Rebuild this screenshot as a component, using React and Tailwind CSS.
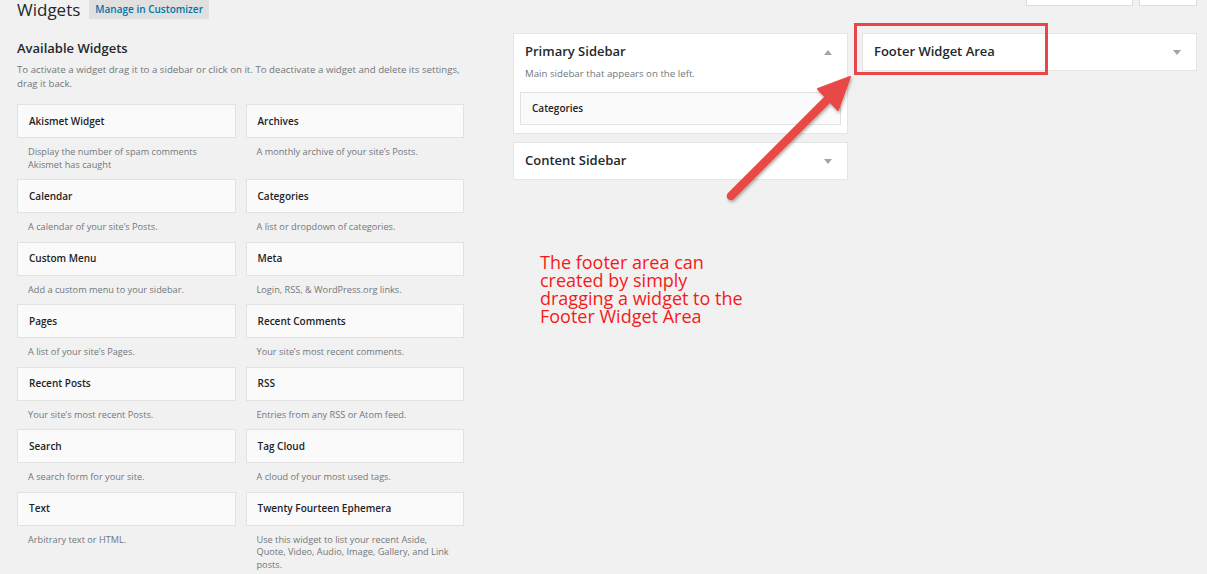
import React from "react";

const widgets = [
  ["Akismet Widget", "Display the number of spam comments Akismet has caught"],
  ["Archives", "A monthly archive of your site’s Posts."],
  ["Calendar", "A calendar of your site’s Posts."],
  ["Categories", "A list or dropdown of categories."],
  ["Custom Menu", "Add a custom menu to your sidebar."],
  ["Meta", "Login, RSS, & WordPress.org links."],
  ["Pages", "A list of your site’s Pages."],
  ["Recent Comments", "Your site’s most recent comments."],
  ["Recent Posts", "Your site’s most recent Posts."],
  ["RSS", "Entries from any RSS or Atom feed."],
  ["Search", "A search form for your site."],
  ["Tag Cloud", "A cloud of your most used tags."],
  ["Text", "Arbitrary text or HTML."],
  [
    "Twenty Fourteen Ephemera",
    "Use this widget to list your recent Aside, Quote, Video, Audio, Image, Gallery, and Link posts.",
  ],
];

function Caret({ up }) {
  return (
    <svg width="8" height="5" viewBox="0 0 8 5" className="mr-[4px]">
      {up ? <path d="M4 0L8 5H0z" fill="#a0a5aa" /> : <path d="M0 0h8L4 5z" fill="#a0a5aa" />}
    </svg>
  );
}

function Widget({ title, desc }) {
  return (
    <div>
      <div className="h-[34px] border border-[#e2e2e2] bg-[#fafafa] px-[11px] flex items-center text-[10px] font-semibold text-[#1d2327]">
        {title}
      </div>
      <p className="mt-[8px] mb-[8px] px-[11px] text-[9.2px] leading-[12.5px] text-[#72777c]">{desc}</p>
    </div>
  );
}

function SidebarHead({ title, up }) {
  return (
    <div className="h-[36px] px-[11px] flex items-center justify-between">
      <span className="text-[13px] font-semibold text-[#23282d]">{title}</span>
      <Caret up={up} />
    </div>
  );
}

export default function App() {
  return (
    <div className="relative min-h-screen bg-[#f1f1f1] font-['Open_Sans',sans-serif] overflow-hidden">
      {/* header */}
      <div className="flex items-start h-[33px] pl-[17px] pr-[10px]">
        <h1 className="text-[17px] leading-[20px] text-[#23282d]">Widgets</h1>
        <span className="ml-[9px] h-[19px] px-[6px] bg-[#e0e0e0] text-[#0073aa] text-[10px] font-semibold leading-[19px]">
          Manage in Customizer
        </span>
        <div className="ml-auto flex gap-[6px]">
          <div className="w-[107px] h-[6px] bg-white border border-t-0 border-[#dcdcdc]" />
          <div className="w-[58px] h-[6px] bg-white border border-t-0 border-[#dcdcdc]" />
        </div>
      </div>

      <div className="flex pl-[17px] pr-[10px]">
        {/* available widgets */}
        <div className="w-[447px] pt-[7px]">
          <h2 className="text-[13px] font-semibold leading-[16px] text-[#23282d]">Available Widgets</h2>
          <p className="mt-[7px] text-[9.7px] leading-[14px] text-[#72777c]">
            To activate a widget drag it to a sidebar or click on it. To deactivate a widget and delete its settings,
            drag it back.
          </p>
          <div className="mt-[13px] grid grid-cols-2 gap-x-[10px]">
            {widgets.map(([t, d]) => (
              <Widget key={t} title={t} desc={d} />
            ))}
          </div>
        </div>

        {/* sidebars */}
        <div className="ml-[49px] w-[335px]">
          <div className="bg-white border border-[#e5e5e5]">
            <SidebarHead title="Primary Sidebar" up />
            <p className="px-[11px] -mt-[3px] text-[9.7px] leading-[13px] text-[#72777c]">
              Main sidebar that appears on the left.
            </p>
            <div className="mt-[12px] mb-[8px] mx-[6px] h-[33px] border border-[#e2e2e2] bg-[#fafafa] px-[11px] flex items-center text-[10px] font-semibold text-[#1d2327]">
              Categories
            </div>
          </div>
          <div className="mt-[8px] bg-white border border-[#e5e5e5]">
            <SidebarHead title="Content Sidebar" />
          </div>
          <p className="mt-[73px] pl-[27px] whitespace-nowrap text-[18px] leading-[18px] text-[#f51a1a]">
            The footer area can
            <br />
            created by simply
            <br />
            dragging a widget to the
            <br />
            Footer Widget Area
          </p>
        </div>

        <div className="ml-[14px] w-[335px]">
          <div className="relative bg-white border border-[#e5e5e5]">
            <SidebarHead title="Footer Widget Area" />
            <div className="absolute -left-[9px] -top-[11px] w-[194px] h-[52px] border-[3px] border-[#e8474a]" />
          </div>
        </div>
      </div>

      {/* annotation arrow */}
      <svg className="absolute left-0 top-0 pointer-events-none" width="1207" height="574">
        <defs>
          <filter id="sh" x="-20%" y="-20%" width="140%" height="140%">
            <feDropShadow dx="1" dy="2" stdDeviation="1.5" floodColor="#000" floodOpacity="0.3" />
          </filter>
        </defs>
        <g filter="url(#sh)">
          <line x1="731" y1="196" x2="832" y2="95" stroke="#e84a47" strokeWidth="8.5" strokeLinecap="round" />
          <path d="M850 77L818 89L838 110Z" fill="#e84a47" stroke="#e84a47" strokeWidth="2" strokeLinejoin="round" />
        </g>
      </svg>
    </div>
  );
}
